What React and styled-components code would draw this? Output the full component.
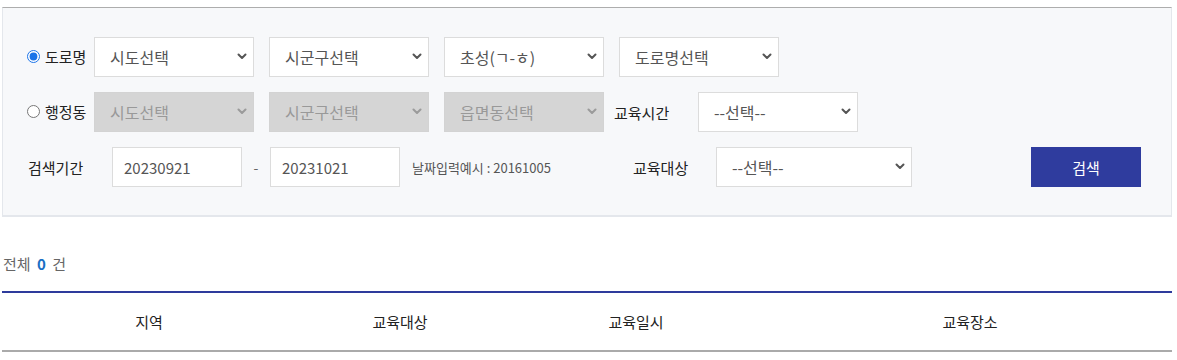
import React from "react";
import styled, { createGlobalStyle } from "styled-components";

const GlobalStyle = createGlobalStyle`
  body {
    margin: 0;
    background: #fff;
    font-family: "Noto Sans CJK KR", "Noto Sans", sans-serif;
    color: #222;
  }
`;

const Chevron = () => (
  <svg width="10" height="7" viewBox="0 0 10 7" fill="none">
    <path d="M1.5 1.5 L5 5 L8.5 1.5" stroke="#555" strokeWidth="2" strokeLinecap="round" strokeLinejoin="round" />
  </svg>
);

const SelectField = ({ width, disabled, children }) => (
  <SelectWrap width={width}>
    <Select disabled={disabled} $disabled={disabled}>
      {children}
    </Select>
    <ArrowIcon $disabled={disabled}>
      <Chevron />
    </ArrowIcon>
  </SelectWrap>
);

const App = () => {
  return (
    <Page>
      <GlobalStyle />
      <SearchPanel>
        <Row>
          <RadioLabel>
            <Radio type="radio" name="addr" defaultChecked />
            도로명
          </RadioLabel>
          <SelectGroup>
            <SelectField width={160}><option>시도선택</option></SelectField>
            <SelectField width={160}><option>시군구선택</option></SelectField>
            <SelectField width={160}><option>초성(ㄱ-ㅎ)</option></SelectField>
            <SelectField width={160}><option>도로명선택</option></SelectField>
          </SelectGroup>
        </Row>
        <Row>
          <RadioLabel>
            <Radio type="radio" name="addr" />
            행정동
          </RadioLabel>
          <SelectGroup>
            <SelectField width={160} disabled><option>시도선택</option></SelectField>
            <SelectField width={160} disabled><option>시군구선택</option></SelectField>
            <SelectField width={160} disabled><option>읍면동선택</option></SelectField>
          </SelectGroup>
          <FieldLabel width={84} $gap={10}>교육시간</FieldLabel>
          <SelectField width={160}><option>--선택--</option></SelectField>
        </Row>
        <Row>
          <FieldLabel width={85} $pad={1}>검색기간</FieldLabel>
          <DateInput defaultValue="20230921" />
          <Dash>-</Dash>
          <DateInput defaultValue="20231021" />
          <Hint>날짜입력예시 : 20161005</Hint>
          <FieldLabel width={83}>교육대상</FieldLabel>
          <SelectField width={196}><option>--선택--</option></SelectField>
          <SearchButton type="button">검색</SearchButton>
        </Row>
      </SearchPanel>

      <Total>
        전체 <Count>0</Count> 건
      </Total>

      <Table>
        <colgroup>
          <col style={{ width: 294 }} />
          <col style={{ width: 208 }} />
          <col style={{ width: 264 }} />
          <col />
        </colgroup>
        <thead>
          <tr>
            <Th>지역</Th>
            <Th>교육대상</Th>
            <Th>교육일시</Th>
            <Th>교육장소</Th>
          </tr>
        </thead>
      </Table>
    </Page>
  );
};

export default App;

const Page = styled.div`
  width: 1170px;
  padding: 7px 0 0 2px;
`;

const SearchPanel = styled.div`
  display: flex;
  flex-direction: column;
  gap: 15px;
  box-sizing: border-box;
  width: 1170px;
  height: 210px;
  padding: 29px 30px 0 24px;
  background: #f7f8fa;
  border: 1px solid #e4e7ec;
  border-top-color: #adadad;
  border-bottom-width: 2px;
`;

const Row = styled.div`
  display: flex;
  align-items: center;
  height: 40px;
`;

const RadioLabel = styled.label`
  display: flex;
  align-items: center;
  width: 67px;
  font-size: 15px;
  color: #222;
  margin-top: -2px;
`;

const Radio = styled.input`
  width: 13px;
  height: 13px;
  margin: 1px 5px 0 0;
  accent-color: #1a73e8;
`;

const SelectGroup = styled.div`
  display: flex;
  gap: 15px;
`;

const SelectWrap = styled.div`
  position: relative;
  width: ${(p) => p.width}px;
  height: 40px;
`;

const Select = styled.select`
  appearance: none;
  width: 100%;
  height: 40px;
  box-sizing: border-box;
  padding: 0 30px 0 15px;
  border: 1px solid ${(p) => (p.$disabled ? "#d3d3d3" : "#dcdcdc")};
  border-radius: 0;
  background: ${(p) => (p.$disabled ? "#d5d5d5" : "#fff")};
  color: ${(p) => (p.$disabled ? "#999" : "#555")};
  font-family: inherit;
  font-size: 16px;
  opacity: 1;
  outline: none;
`;

const ArrowIcon = styled.span`
  position: absolute;
  right: 7px;
  top: 16px;
  display: flex;
  pointer-events: none;
  opacity: ${(p) => (p.$disabled ? 0.45 : 1)};
`;

const FieldLabel = styled.span`
  box-sizing: border-box;
  width: ${(p) => p.width}px;
  margin-left: ${(p) => p.$gap || 0}px;
  padding-left: ${(p) => p.$pad || 0}px;
  font-size: 15px;
  color: #222;
  flex-shrink: 0;
`;

const DateInput = styled.input`
  box-sizing: border-box;
  width: 130px;
  height: 40px;
  padding: 0 11px;
  border: 1px solid #dcdcdc;
  background: #fff;
  color: #555;
  font-family: inherit;
  font-size: 15px;
  outline: none;
`;

const Dash = styled.span`
  width: 28px;
  text-align: center;
  font-size: 14px;
  color: #666;
`;

const Hint = styled.span`
  width: 221px;
  margin-left: 12px;
  font-size: 13px;
  letter-spacing: 0;
  color: #555;
`;

const SearchButton = styled.button`
  margin-left: auto;
  width: 110px;
  height: 40px;
  border: none;
  background: #2f3c9e;
  color: #fff;
  font-family: inherit;
  font-size: 15px;
  cursor: pointer;
`;

const Total = styled.div`
  margin: 37px 0 0 1px;
  font-size: 15px;
  line-height: 20px;
  color: #666;
`;

const Count = styled.strong`
  margin: 0 3px;
  color: #1a6fc4;
  font-weight: 700;
`;

const Table = styled.table`
  width: 1170px;
  margin-top: 17px;
  border-collapse: collapse;
  border-top: 2px solid #2e3b9c;
  border-bottom: 2px solid #aaa;
`;

const Th = styled.th`
  height: 57px;
  padding: 0;
  font-size: 15px;
  font-weight: 400;
  color: #222;
  text-align: center;
`;
